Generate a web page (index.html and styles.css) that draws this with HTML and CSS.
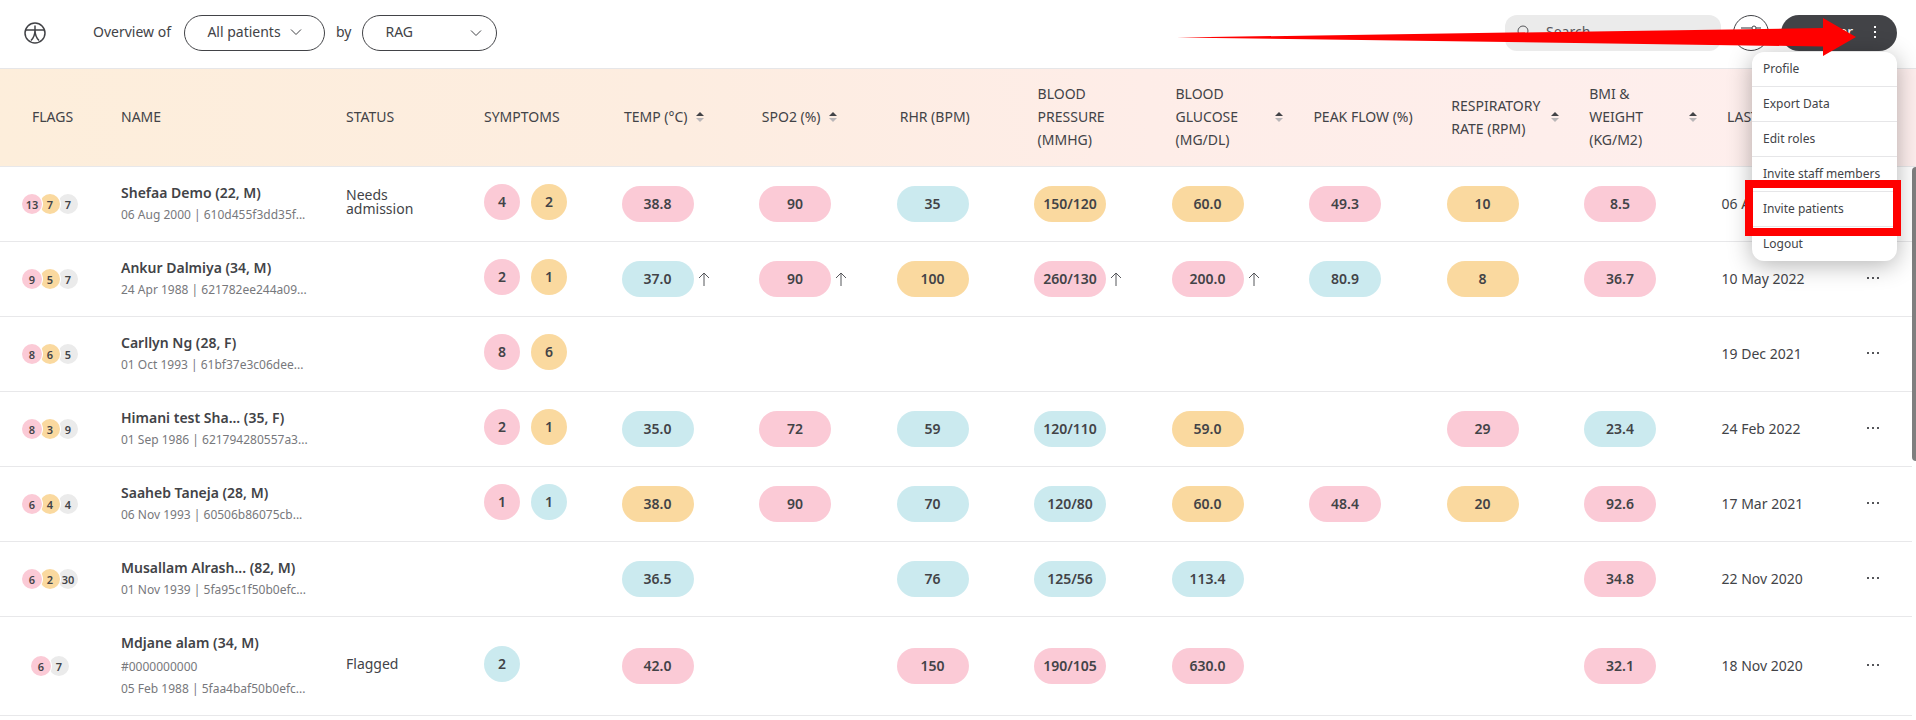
FILE: index.html
```html
<!DOCTYPE html>
<html lang="en">
<head>
<meta charset="utf-8">
<title>Patient overview</title>
<link rel="stylesheet" href="styles.css">
</head>
<body>
<svg class="defs" aria-hidden="true">
  <symbol id="up" viewBox="0 0 12 14"><path d="M6 14V1M1 6l5-5 5 5" fill="none" stroke="#55565a"/></symbol>
  <symbol id="sort" viewBox="0 0 8 12"><path d="M4 1l4 4H0z" fill="#424347"/><path d="M4 11L0 7h8z" fill="#b9b6b8"/></symbol>
  <symbol id="dots" viewBox="0 0 14 4"><path d="M1 1h2v2H1zM6 1h2v2H6zM11 1h2v2h-2z" fill="#55565a"/></symbol>
  <symbol id="chev" viewBox="0 0 12 8"><path d="M1 1.500l5 5 5-5" fill="none" stroke="#424347"/></symbol>
</svg>
<header class="topbar">
  <svg class="logo" viewBox="0 0 22 22" fill="none" stroke="#424347" role="img" aria-label="Home"><circle cx="11" cy="11" r="10" stroke-width="1.500"/><path d="M1.500 8h19M11 3.500V10M11 8c0 5-1.500 8-4 10.500M11 8c0 5 1.500 8 4 10.500" stroke-width="1.500"/></svg>
  <span class="overview">Overview of</span>
  <button class="pick" type="button">All patients <svg class="chev"><use href="#chev"/></svg></button>
  <label class="by" for="mode">by</label>
  <span class="modewrap"><select id="mode" class="mode"><option>RAG</option></select><svg class="chev"><use href="#chev"/></svg></span>
  <div class="tools">
    <label class="search"><svg viewBox="0 0 14 14" fill="none" stroke="#55565a"><circle cx="6" cy="6" r="5"/><path d="M10 10l3 3"/></svg><input type="search" placeholder="Search" aria-label="Search"></label>
    <button class="filter" type="button" aria-label="Filters"><svg viewBox="0 0 20 16" fill="none" stroke="#424347"><path d="M0 3h11M15 3h5M0 12h4M8 12h12" stroke="#97989b" stroke-width="2"/><circle cx="13" cy="3" r="2"/><circle cx="6" cy="12" r="2"/></svg></button>
    <div class="account">
      <button class="user" type="button"><span>User</span><svg viewBox="0 0 4 14" fill="#fff"><path d="M1 1h2v2H1zM1 6h2v2H1zM1 11h2v2H1z"/></svg></button>
      <ul class="menu">
        <li><a href="#">Profile</a></li><li><a href="#">Export Data</a></li><li><a href="#">Edit roles</a></li><li><a href="#">Invite staff members</a></li><li class="marked"><a href="#">Invite patients</a></li><li><a href="#">Logout</a></li>
      </ul>
      <svg class="arrow" viewBox="0 0 680 40"><path d="M0 20.500L646 11V1l33 19-33 19V29.500z" fill="#f00"/></svg>
    </div>
  </div>
</header>
<main class="board">
<table>
<thead><tr><th>FLAGS</th><th>NAME</th><th>STATUS</th><th>SYMPTOMS</th>
<th><span>TEMP (°C)</span><svg><use href="#sort"/></svg></th><th><span>SPO2 (%)</span><svg><use href="#sort"/></svg></th><th>RHR (BPM)</th><th>BLOOD<br>PRESSURE<br>(MMHG)</th><th class="far"><span>BLOOD<br>GLUCOSE<br>(MG/DL)</span><svg><use href="#sort"/></svg></th><th>PEAK FLOW (%)</th><th class="far"><span>RESPIRATORY RATE (RPM)</span><svg><use href="#sort"/></svg></th><th class="far"><span>BMI &amp;<br>WEIGHT<br>(KG/M2)</span><svg><use href="#sort"/></svg></th><th>LAST SEEN</th><th></th></tr></thead>
<tbody id="rows"></tbody>
</table>
<div class="thumb"></div>
</main>
<script src="rows.js"></script>
</body>
</html>
```
FILE: rows.js
```js
// p = pink, o = orange, b = blue, g = grey; a trailing ^ marks a rising value
const patients = [
  [["p13","o7","g7"], "Shefaa Demo (22, M)", ["06 Aug 2000 | 610d455f3dd35f..."], "Needs admission", ["p4","o2"], ["p38.8","p90","b35","o150/120","o60.0","p49.3","o10","p8.5"], "06 Aug 2022"],
  [["p9","o5","g7"], "Ankur Dalmiya (34, M)", ["24 Apr 1988 | 621782ee244a09..."], "", ["p2","o1"], ["b37.0^","p90^","o100","p260/130^","p200.0^","b80.9","o8","p36.7"], "10 May 2022"],
  [["p8","o6","g5"], "Carllyn Ng (28, F)", ["01 Oct 1993 | 61bf37e3c06dee..."], "", ["p8","o6"], ["","","","","","","",""], "19 Dec 2021"],
  [["p8","o3","g9"], "Himani test Sha... (35, F)", ["01 Sep 1986 | 621794280557a3..."], "", ["p2","o1"], ["b35.0","p72","b59","b120/110","o59.0","","p29","b23.4"], "24 Feb 2022"],
  [["p6","o4","g4"], "Saaheb Taneja (28, M)", ["06 Nov 1993 | 60506b86075cb..."], "", ["p1","b1"], ["o38.0","p90","b70","b120/80","o60.0","p48.4","o20","p92.6"], "17 Mar 2021"],
  [["p6","o2","g30"], "Musallam Alrash... (82, M)", ["01 Nov 1939 | 5fa95c1f50b0efc..."], "", [], ["b36.5","","b76","b125/56","b113.4","","","p34.8"], "22 Nov 2020"],
  [["p6","g7"], "Mdjane alam (34, M)", ["#0000000000", "05 Feb 1988 | 5faa4baf50b0efc..."], "Flagged", ["b2"], ["p42.0","","p150","p190/105","p630.0","","","p32.1"], "18 Nov 2020"]
];
const chip = (kind, v) => v ? `<span class="${kind} ${v[0]}">${v.slice(1).replace("^", "")}</span>` + (v.endsWith("^") ? '<svg class="up"><use href="#up"/></svg>' : "") : "";
document.getElementById("rows").innerHTML = patients.map(([flags, name, info, status, symptoms, values, date]) => `<tr>
<td class="flags">${flags.map(v => chip("flag", v)).join("")}</td>
<td class="who"><strong>${name}</strong>${info.map(t => `<small>${t}</small>`).join("")}</td>
<td class="status"><span>${status}</span></td>
<td class="symptoms">${symptoms.map(v => chip("dot", v)).join("")}</td>
${values.map(v => `<td>${chip("pill", v)}</td>`).join("")}
<td>${date}</td>
<td><button class="more" type="button" aria-label="More"><svg><use href="#dots"/></svg></button></td></tr>`).join("");
```
FILE: styles.css
```css
* { box-sizing: border-box; }
body { margin: 0; background: #fff; color: #424347; font: 14px/22px "Noto Sans", sans-serif; overflow-x: hidden; }
button, input, select { font: inherit; color: inherit; margin: 0; }
.defs { position: absolute; width: 0; height: 0; }
.topbar { display: flex; align-items: center; padding: 15px 19px 17px 24px; border-bottom: 1px solid #e6e6e8; }
.logo { width: 22px; height: 22px; }
.overview { margin-left: 47px; padding-bottom: 2px; }
.chev { width: 12px; height: 8px; }
.pick { display: flex; align-items: center; justify-content: center; gap: 9px; min-width: 141px; height: 36px; margin-left: 13px; padding: 0 0 2px; border: 1px solid #424347; border-radius: 18px; background: #fff; }
.by { margin: 0 11px; padding-bottom: 2px; }
.modewrap { display: flex; align-items: center; position: relative; }
.mode { appearance: none; width: 135px; height: 36px; padding: 0 22px 2px; border: 1px solid #424347; border-radius: 18px; background: #fff; }
.modewrap .chev { position: absolute; right: 15px; pointer-events: none; }
.tools { display: flex; margin-left: auto; gap: 12px; }
.search { display: flex; align-items: center; gap: 15px; width: 216px; height: 36px; padding: 0 12px 2px; border-radius: 12px; background: #ebebeb; }
.search svg { flex: none; width: 14px; height: 14px; }
.search input { min-width: 0; flex: 1; padding: 0; border: 0; background: none; outline: 0; }
.search input::placeholder { color: #55565a; }
.filter { width: 36px; height: 36px; padding: 0; border: 1px solid #424347; border-radius: 50%; background: #fff; }
.filter svg { width: 20px; height: 16px; display: block; margin: auto; }
.account { position: relative; }
.user { display: flex; align-items: center; justify-content: flex-end; gap: 20px; width: 116px; height: 36px; padding: 0 20px 2px 18px; border: 0; border-radius: 18px; background: #424347; color: #fff; }
.user svg { width: 4px; height: 14px; }
.menu { position: absolute; z-index: 2; top: 37px; right: 0; min-width: 145px; margin: 0; padding: 0; list-style: none; background: #fff; border-radius: 12px; box-shadow: 0 4px 24px rgba(0, 0, 0, .3); font-size: 12px; }
.menu li { position: relative; }
.menu li + li { border-top: 1px solid #e6e6e8; }
.menu a { display: block; padding: 6px 11px; color: inherit; text-decoration: none; white-space: nowrap; }
.marked::after { content: ""; position: absolute; inset: -12px -4px -10px -7px; border: 8px solid #f00; z-index: 1; pointer-events: none; }
.arrow { position: absolute; z-index: 3; top: 2px; right: 40px; width: 680px; height: 40px; pointer-events: none; }

.board { position: relative; }
table, thead, tbody { display: block; }
tr { display: grid; grid-template-columns: 121px 225px 138px repeat(10, minmax(0, 1fr)) 53px; align-items: center; border-bottom: 1px solid #e8e8ea; }
th, td { display: flex; align-items: center; padding: 0; text-align: left; font-weight: 400; }
thead tr { background: linear-gradient(80deg, #fdeedb, #fdede0 35%, #feede8 60%, #feefee); padding: 13px 0 15px; }
th { line-height: 23px; padding-left: 2px; gap: 8px; }
th:first-child { padding-left: 32px; }
th:nth-child(2), th:nth-child(3), th:nth-child(4) { padding-left: 0; }
th svg { flex: none; width: 8px; height: 12px; }
.far { justify-content: space-between; padding-right: 28px; }
tbody { margin-right: 4px; }
tbody tr { padding: 15px 0; }
.flags { width: 100px; justify-content: center; }
.flag { display: grid; place-items: center; width: 20px; height: 20px; margin-right: -2px; border-radius: 50%; box-shadow: 0 0 0 1px #fff; font-size: 11px; font-weight: 600; position: relative; }
.flag:last-child { margin-right: 0; }
.flag:nth-child(1) { z-index: 2; }
.flag:nth-child(2) { z-index: 1; }
.who { display: block; }
.who strong, .who small { display: block; font-weight: 600; }
.who small { font-size: 12px; font-weight: 400; color: #77787c; }
.who small:not(:last-child) { margin-top: 2px; }
.status { line-height: 14px; padding-bottom: 4px; }
.status span { width: 80px; }
.symptoms { gap: 11px; padding-bottom: 4px; }
.dot, .pill { display: grid; place-items: center; width: 36px; height: 36px; border-radius: 18px; font-weight: 600; }
.pill { width: 72px; }
.up { width: 12px; height: 14px; margin-left: 4px; }
.p { background: #fbcad6; }
.o { background: #fad99f; }
.b { background: #cbeaef; }
.g { background: #ebebeb; }
.more { padding: 3px 7px 5px; border: 0; background: none; display: flex; }
.more svg { width: 14px; height: 4px; }
.thumb { position: absolute; right: 0; top: 98px; width: 4px; height: 294px; border-radius: 4px 0 0 4px; background: #7f7f7f; }
```
